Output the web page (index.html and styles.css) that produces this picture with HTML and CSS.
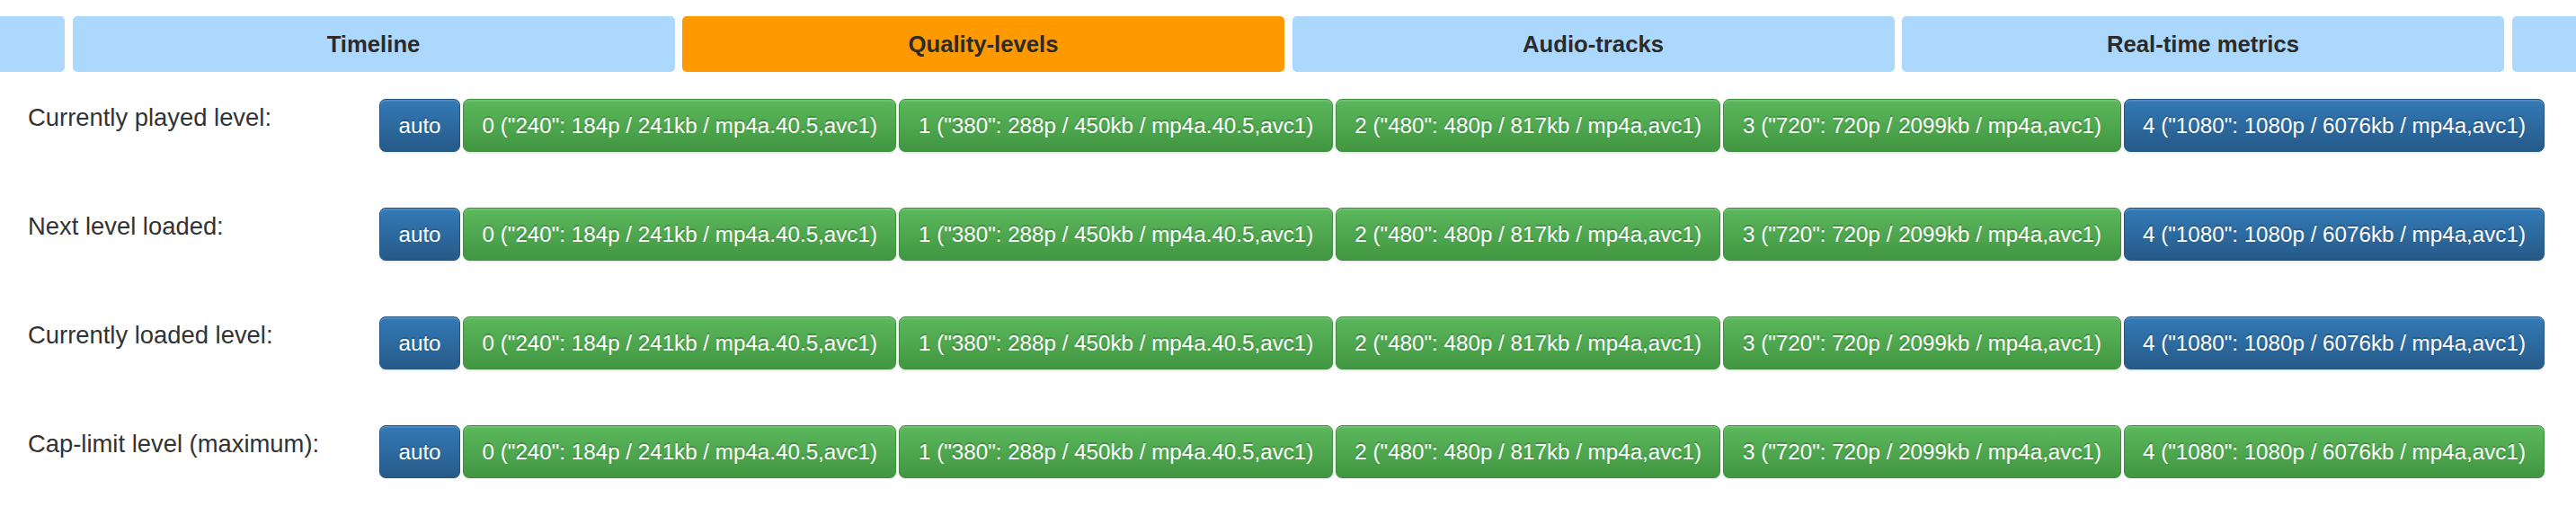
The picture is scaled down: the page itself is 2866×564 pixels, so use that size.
FILE: index.html
```html
<!DOCTYPE html>
<html lang="en">
<head>
<meta charset="utf-8">
<title>Quality levels</title>
<link rel="stylesheet" href="styles.css">
</head>
<body>
<nav class="tabs">
  <div class="tab-track">
    <button class="tab" aria-label="Playback"></button>
    <button class="tab">Timeline</button>
    <button class="tab tab-active">Quality-levels</button>
    <button class="tab">Audio-tracks</button>
    <button class="tab">Real-time metrics</button>
    <button class="tab" aria-label="Buffer &amp; Statistics"></button>
  </div>
</nav>

<section class="levels">
  <div class="level-row">
    <div class="level-label">Currently played level:</div>
    <div class="btn-row">
      <button class="btn btn-primary">auto</button>
      <button class="btn btn-success">0 ("240": 184p / 241kb / mp4a.40.5,avc1)</button>
      <button class="btn btn-success">1 ("380": 288p / 450kb / mp4a.40.5,avc1)</button>
      <button class="btn btn-success">2 ("480": 480p / 817kb / mp4a,avc1)</button>
      <button class="btn btn-success">3 ("720": 720p / 2099kb / mp4a,avc1)</button>
      <button class="btn btn-primary">4 ("1080": 1080p / 6076kb / mp4a,avc1)</button>
    </div>
  </div>
  <div class="level-row">
    <div class="level-label">Next level loaded:</div>
    <div class="btn-row">
      <button class="btn btn-primary">auto</button>
      <button class="btn btn-success">0 ("240": 184p / 241kb / mp4a.40.5,avc1)</button>
      <button class="btn btn-success">1 ("380": 288p / 450kb / mp4a.40.5,avc1)</button>
      <button class="btn btn-success">2 ("480": 480p / 817kb / mp4a,avc1)</button>
      <button class="btn btn-success">3 ("720": 720p / 2099kb / mp4a,avc1)</button>
      <button class="btn btn-primary">4 ("1080": 1080p / 6076kb / mp4a,avc1)</button>
    </div>
  </div>
  <div class="level-row">
    <div class="level-label">Currently loaded level:</div>
    <div class="btn-row">
      <button class="btn btn-primary">auto</button>
      <button class="btn btn-success">0 ("240": 184p / 241kb / mp4a.40.5,avc1)</button>
      <button class="btn btn-success">1 ("380": 288p / 450kb / mp4a.40.5,avc1)</button>
      <button class="btn btn-success">2 ("480": 480p / 817kb / mp4a,avc1)</button>
      <button class="btn btn-success">3 ("720": 720p / 2099kb / mp4a,avc1)</button>
      <button class="btn btn-primary">4 ("1080": 1080p / 6076kb / mp4a,avc1)</button>
    </div>
  </div>
  <div class="level-row">
    <div class="level-label">Cap-limit level (maximum):</div>
    <div class="btn-row">
      <button class="btn btn-primary">auto</button>
      <button class="btn btn-success">0 ("240": 184p / 241kb / mp4a.40.5,avc1)</button>
      <button class="btn btn-success">1 ("380": 288p / 450kb / mp4a.40.5,avc1)</button>
      <button class="btn btn-success">2 ("480": 480p / 817kb / mp4a,avc1)</button>
      <button class="btn btn-success">3 ("720": 720p / 2099kb / mp4a,avc1)</button>
      <button class="btn btn-success">4 ("1080": 1080p / 6076kb / mp4a,avc1)</button>
    </div>
  </div>
</section>
</body>
</html>
```

FILE: styles.css
```css
html, body {
  margin: 0;
  padding: 0;
  background: #ffffff;
}

body {
  font-family: "Liberation Sans", Arial, Helvetica, sans-serif;
  color: #333333;
  font-size: 27.4px;
  line-height: 39px;
}

.tabs {
  margin-top: 18px;
  height: 62px;
  overflow: hidden;
}

.tab-track {
  display: flex;
  gap: 8.5px;
  margin-left: -598px;
  height: 100%;
}

.tab {
  flex: 0 0 670px;
  height: 62px;
  border: none;
  border-radius: 5px;
  background: #acd8fe;
  color: #2b2b2b;
  font-family: "Liberation Sans", Arial, Helvetica, sans-serif;
  font-size: 25.7px;
  font-weight: bold;
  padding: 0;
  display: flex;
  align-items: center;
  justify-content: center;
}

.tab-active {
  background: #ff9900;
}

.levels {
  margin-top: 30px;
  padding-left: 31px;
}

.level-row {
  display: flex;
  align-items: flex-start;
  margin-bottom: 62px;
}

.level-row:last-child {
  margin-bottom: 0;
}

.level-label {
  flex: 0 0 391px;
  padding-top: 1px;
  white-space: nowrap;
}

.btn-row {
  display: flex;
  gap: 3px;
  flex-wrap: nowrap;
}

.btn {
  font-family: "Liberation Sans", Arial, Helvetica, sans-serif;
  font-size: 24.2px;
  line-height: 34px;
  padding: 11.5px 20.5px;
  border: 1px solid transparent;
  border-radius: 7px;
  color: #ffffff;
  white-space: nowrap;
  text-shadow: 0 -1.7px 0 rgba(0, 0, 0, 0.2);
  box-shadow: inset 0 1.7px 0 rgba(255, 255, 255, 0.15), 0 1.7px 1.7px rgba(0, 0, 0, 0.075);
}

.btn-primary {
  background: linear-gradient(to bottom, #337ab7 0%, #265a88 100%);
  border-color: #245580;
}

.btn-success {
  background: linear-gradient(to bottom, #5cb85c 0%, #419641 100%);
  border-color: #3e8f3e;
}
```
